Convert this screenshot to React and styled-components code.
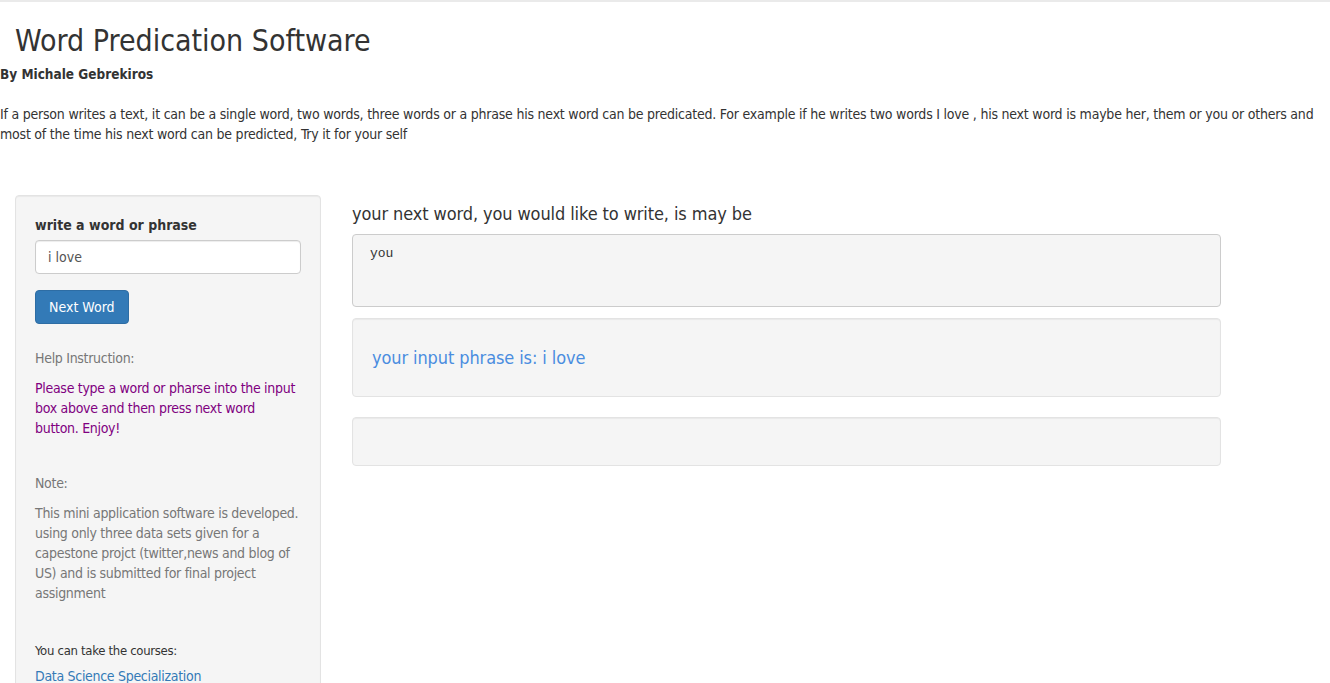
import React from "react";
import styled, { createGlobalStyle } from "styled-components";

const GlobalStyle = createGlobalStyle`
  html, body {
    margin: 0;
    padding: 0;
    background: #fff;
  }
  body {
    font-family: "DejaVu Sans Condensed", "DejaVu Sans", sans-serif;
    font-size: 14px;
    line-height: 20px;
    color: #333;
  }
  * {
    box-sizing: border-box;
  }
`;

const Page = styled.div`
  border-top: 2px solid #eaeaea;
  min-height: 681px;
  overflow: hidden;
`;

const Title = styled.h2`
  margin: 22px 0 7px;
  padding-left: 15px;
  font-size: 30px;
  font-weight: 500;
  line-height: 33px;
  color: #333;
`;

const Byline = styled.div`
  font-weight: bold;
  font-size: 13.5px;
  line-height: 20px;
`;

const Intro = styled.p`
  margin: 20px 0 0;
  font-size: 14px;
  letter-spacing: -0.22px;
`;

const Row = styled.div`
  display: flex;
  align-items: flex-start;
  gap: 31px;
  padding: 0 15px;
  margin-top: 51px;
`;

const Sidebar = styled.div`
  width: 306px;
  min-height: 520px;
  flex-shrink: 0;
  padding: 19px;
  background: #f5f5f5;
  border: 1px solid #e3e3e3;
  border-radius: 4px;
  box-shadow: inset 0 1px 1px rgba(0, 0, 0, 0.05);
`;

const Label = styled.label`
  display: block;
  font-weight: bold;
  margin-bottom: 5px;
`;

const TextInput = styled.input`
  display: block;
  width: 100%;
  height: 34px;
  padding: 6px 12px;
  font-family: inherit;
  font-size: 14px;
  color: #555;
  background: #fff;
  border: 1px solid #ccc;
  border-radius: 4px;
  box-shadow: inset 0 1px 1px rgba(0, 0, 0, 0.075);
  margin-bottom: 16px;
`;

const Button = styled.button`
  display: inline-block;
  height: 34px;
  padding: 6px 13px;
  font-family: inherit;
  font-size: 14px;
  line-height: 20px;
  color: #fff;
  background: #337ab7;
  border: 1px solid #2e6da4;
  border-radius: 4px;
  cursor: pointer;
`;

const SideText = styled.p`
  margin: ${(p) => p.$top || 0}px 0 0;
  color: ${(p) => p.$color || "#777"};
  font-size: ${(p) => p.$size || 14}px;
  letter-spacing: -0.3px;
`;

const Link = styled.a`
  display: block;
  margin-top: 5px;
  color: #337ab7;
  text-decoration: none;
  letter-spacing: -0.3px;
`;

const Main = styled.div`
  width: 869px;
  padding-top: 8px;
`;

const Heading = styled.h4`
  margin: 0 0 9px;
  font-size: 18px;
  font-weight: 500;
  line-height: 22px;
  letter-spacing: -0.1px;
  color: #333;
`;

const Pre = styled.pre`
  margin: 0 0 11px;
  height: 73px;
  padding: 10px 17px;
  font-family: "Courier New", "Liberation Mono", monospace;
  font-size: 13px;
  line-height: 18px;
  color: #333;
  background: #f5f5f5;
  border: 1px solid #ccc;
  border-radius: 4px;
`;

const Well = styled.div`
  min-height: ${(p) => p.$minHeight || 40}px;
  margin-bottom: 20px;
  padding: 19px;
  background: #f5f5f5;
  border: 1px solid #e3e3e3;
  border-radius: 4px;
  box-shadow: inset 0 1px 1px rgba(0, 0, 0, 0.05);
`;

const Phrase = styled.h4`
  margin: 10px 0 9px;
  font-size: 18px;
  font-weight: 500;
  line-height: 20px;
  letter-spacing: -0.1px;
  color: #4a8de0;
`;

export default function App() {
  return (
    <>
      <GlobalStyle />
      <Page>
        <Title>Word Predication Software</Title>
        <Byline>By Michale Gebrekiros</Byline>
        <Intro>
          If a person writes a text, it can be a single word, two words, three
          words or a phrase his next word can be predicated. For example if he
          writes two words I love , his next word is maybe her, them or you or
          others and most of the time his next word can be predicted, Try it
          for your self
        </Intro>
        <Row>
          <Sidebar>
            <Label htmlFor="phrase">write a word or phrase</Label>
            <TextInput id="phrase" defaultValue="i love" />
            <Button>Next Word</Button>
            <SideText $top={24}>Help Instruction:</SideText>
            <SideText $top={10} $color="#800080">
              Please type a word or pharse into the input box above and then
              press next word button. Enjoy!
            </SideText>
            <SideText $top={35}>Note:</SideText>
            <SideText $top={10}>
              This mini application software is developed. using only three
              data sets given for a capestone projct (twitter,news and blog of
              US) and is submitted for final project assignment
            </SideText>
            <SideText $top={38} $color="#333" $size={13}>
              You can take the courses:
            </SideText>
            <Link href="#">Data Science Specialization</Link>
          </Sidebar>
          <Main>
            <Heading>your next word, you would like to write, is may be</Heading>
            <Pre>you</Pre>
            <Well>
              <Phrase>your input phrase is: i love</Phrase>
            </Well>
            <Well $minHeight={49} />
          </Main>
        </Row>
      </Page>
    </>
  );
}
